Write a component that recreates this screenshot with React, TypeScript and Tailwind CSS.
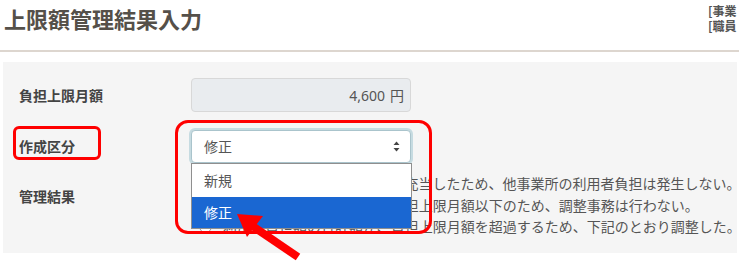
const jp = { fontFamily: '"Noto Sans CJK JP", "Noto Sans", sans-serif' };

const options = [
  { prefix: "自事業所で、利用者負担額に", rest: "充当したため、他事業所の利用者負担は発生しない。" },
  { prefix: "利用者負担額の合計額が、負", rest: "担上限月額以下のため、調整事務は行わない。" },
  { prefix: "利用者負担額の合計額が、負", rest: "担上限月額を超過するため、下記のとおり調整した。" },
];

const App = () => {
  return (
    <div className="relative w-[739px] h-[264px] overflow-hidden bg-white text-[#555]" style={jp}>
      <div className="flex justify-between items-start h-[52px] border-b-2 border-[#ddd6cf]">
        <h1 className="pl-[4px] pt-[5px] text-[22px] font-bold leading-[26px] text-[#555049]">上限額管理結果入力</h1>
        <div className="w-[31px] pt-[3px] text-[12px] font-bold leading-[15px] text-[#555] whitespace-nowrap">
          <div>[事業</div>
          <div>[職員</div>
        </div>
      </div>

      <div className="ml-[3px] mr-[2px] mt-[10px] h-[191px] bg-[#f5f5f5] pt-[16px] pl-[16px]">
        <div className="flex items-center h-[34px]">
          <div className="w-[172px] shrink-0 text-[14px] font-bold text-[#444]">負担上限月額</div>
          <div className="w-[220px] h-[34px] rounded-[4px] border border-[#d8d8d8] bg-[#e9ecef] flex items-center justify-end pr-[6px] text-[14px] text-[#555]">
            <span style={{ fontFamily: '"Noto Sans", sans-serif' }}>4,600</span>
            <span className="ml-[5px]">円</span>
          </div>
        </div>

        <div className="flex items-center h-[33px] mt-[18px]">
          <div className="relative w-[172px] shrink-0 text-[14px] font-bold text-[#444]">
            作成区分
            <div className="absolute left-[-6px] top-[-10px] w-[88px] h-[34px] rounded-[6px] border-[3px] border-[#f00]"></div>
          </div>
          <div className="relative w-[220px] h-[33px]">
            <div className="w-full h-full rounded-[4px] border border-[#aac4cc] bg-white shadow-[0_0_0_2px_#c6dbe1] flex items-center justify-between pl-[12px] pr-[10px] text-[14px] text-[#555]">
              <span>修正</span>
              <svg width="7" height="11" viewBox="0 0 7 11">
                <path d="M3.5 0.5 L6.5 4 H0.5 Z" fill="#444" />
                <path d="M3.5 10.5 L6.5 7 H0.5 Z" fill="#444" />
              </svg>
            </div>
            <div className="absolute left-0 top-[33px] z-10 w-[221px] border border-[#8f8f8f] bg-white text-[14px]">
              <div className="h-[33px] flex items-center pl-[12px] text-[#555]">新規</div>
              <div className="h-[31px] flex items-center pl-[12px] bg-[#1a67d2] text-white">修正</div>
            </div>
            <div className="absolute z-20 left-[-16px] top-[-10px] w-[257px] h-[114px] rounded-[13px] border-[3px] border-[#f00]"></div>
          </div>
        </div>

        <div className="flex items-start mt-[10px]">
          <div className="w-[172px] shrink-0 pt-[13px] text-[14px] font-bold text-[#444]">管理結果</div>
          <div className="flex flex-col text-[14px] leading-[21.5px] text-[#555] whitespace-nowrap">
            {options.map((o, i) => (
              <div key={i} className="flex items-center">
                <span className="inline-block shrink-0 w-[13px] h-[13px] rounded-full border border-[#999] bg-white ml-[8px] mr-[11px]"></span>
                <span>{o.prefix}</span>
                <span>{o.rest}</span>
              </div>
            ))}
          </div>
        </div>
      </div>

      <svg className="absolute left-0 top-0 z-30 pointer-events-none" width="739" height="264" viewBox="0 0 739 264">
        <line x1="298" y1="257" x2="251" y2="225" stroke="#f00" strokeWidth="8" />
        <polygon points="237,214 263,216 247,237" fill="#f00" />
      </svg>
    </div>
  );
};

export default App;
